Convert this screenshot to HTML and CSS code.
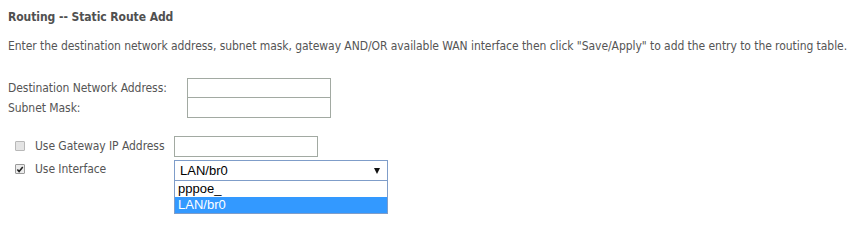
FILE: index.html
```html
<!DOCTYPE html>
<html>
<head>
<meta charset="utf-8">
<link rel="stylesheet" href="styles.css">
</head>
<body>
<div class="page">
  <div class="title">Routing -- Static Route Add</div>
  <p class="desc">Enter the destination network address, subnet mask, gateway AND/OR available WAN interface then click "Save/Apply" to add the entry to the routing table.</p>

  <div class="addr-grid">
    <div class="lbl">Destination Network Address:</div>
    <div class="field"><span class="textbox"></span></div>
    <div class="lbl">Subnet Mask:</div>
    <div class="field"><span class="textbox stacked"></span></div>
  </div>

  <div class="opt-grid">
    <div class="opt"><span class="cb"></span><span class="opt-lbl">Use Gateway IP Address</span></div>
    <div class="field"><span class="textbox"></span></div>
    <div class="opt"><span class="cb checked"><svg viewBox="0 0 9 9" width="9" height="9"><path d="M1.5 4.5 L3.5 6.8 L7.6 1.8" fill="none" stroke="#222" stroke-width="1.8"/></svg></span><span class="opt-lbl">Use Interface</span></div>
    <div class="field select-wrap">
      <div class="select"><span class="sel-text">LAN/br0</span><span class="arrow"></span></div>
      <div class="listbox">
        <div class="item">pppoe_</div>
        <div class="item active">LAN/br0</div>
      </div>
    </div>
  </div>
</div>
</body>
</html>
```

FILE: styles.css
```css
html, body {
  margin: 0;
  padding: 0;
  background: #fff;
}
html {
  min-height: 100vh;
}
body {
  min-height: 225px;
  box-sizing: border-box;
  padding: 8px;
  font-family: "DejaVu Sans Condensed", "DejaVu Sans", Verdana, sans-serif;
  font-stretch: condensed;
  font-size: 12px;
  letter-spacing: -0.06px;
  color: #555;
}
.title {
  font-weight: bold;
  line-height: 16px;
  padding-top: 1px;
  color: #505050;
}
.desc {
  margin: 0;
  margin-top: 13px;
  line-height: 16px;
  white-space: nowrap;
}
.addr-grid {
  display: grid;
  grid-template-columns: 179px 144px;
  margin-top: 24px;
}
.lbl {
  line-height: 20px;
  height: 20px;
}
.textbox {
  display: block;
  box-sizing: border-box;
  width: 144px;
  height: 21px;
  border: 1px solid #a2aaa2;
  background: #fff;
}
.textbox.stacked {
  margin-top: -1px;
}
.field {
  height: 20px;
}
.opt-grid {
  display: grid;
  grid-template-columns: 166px 214px;
  row-gap: 3px;
  margin-top: 18px;
}
.opt {
  display: flex;
  align-items: center;
  height: 20px;
  padding-left: 7px;
}
.cb {
  box-sizing: border-box;
  width: 10px;
  height: 10px;
  border: 1px solid #b8b8b8;
  background: #e4e4e4;
  border-radius: 1px;
  display: flex;
  align-items: center;
  justify-content: center;
}
.cb.checked {
  border-color: #9a9a9a;
  background: #ececec;
}
.opt-lbl {
  margin-left: 10px;
}
.select-wrap {
  position: relative;
  margin-top: 1px;
}
.select {
  box-sizing: border-box;
  width: 214px;
  height: 21px;
  border: 1px solid #7f9dc9;
  background: #fff;
  display: flex;
  align-items: center;
  justify-content: space-between;
  padding: 0 5px 0 5px;
  font-family: "Liberation Sans", Arial, sans-serif;
  font-stretch: normal;
  letter-spacing: 0;
  font-size: 13px;
  color: #000;
}
.arrow {
  width: 0;
  height: 0;
  border-left: 3.5px solid transparent;
  border-right: 3.5px solid transparent;
  border-top: 6px solid #111;
  margin-right: 2px;
}
.listbox {
  position: absolute;
  left: 0;
  top: 20px;
  box-sizing: border-box;
  width: 214px;
  border: 1px solid #7f9dc9;
  background: #fff;
  font-family: "Liberation Sans", Arial, sans-serif;
  font-stretch: normal;
  letter-spacing: 0;
  font-size: 13px;
  color: #000;
  z-index: 2;
}
.item {
  height: 16px;
  line-height: 15px;
  padding-left: 3px;
}
.item.active {
  background: #3399ff;
  color: #fff;
}
```
